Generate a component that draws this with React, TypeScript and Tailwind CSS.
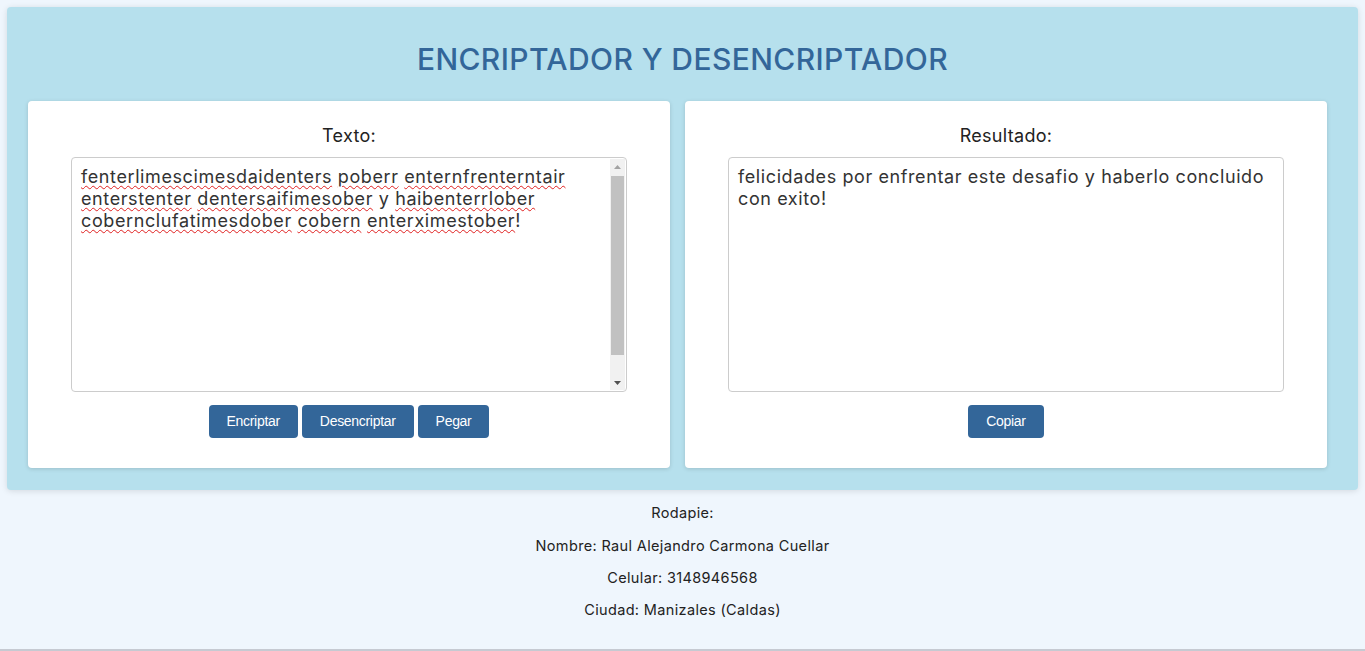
import React from "react";

const encWords = [
  "fenterlimescimesdaidenters",
  "poberr",
  "enternfrenterntair",
  "enterstenter",
  "dentersaifimesober",
  "y",
  "haibenterrlober",
  "cobernclufatimesdober",
  "cobern",
  "enterximestober",
];
const result = "felicidades por enfrentar este desafio y haberlo concluido con exito!";

function Btn({ children }: { children: React.ReactNode }) {
  return (
    <button
      className="h-[33px] rounded-[4px] bg-[#336699] px-[18px] text-[14px] text-white tracking-[-0.3px]"
      style={{ fontFamily: '"Liberation Sans", Arial, sans-serif' }}
    >
      {children}
    </button>
  );
}

function FakeScrollbar() {
  return (
    <div className="absolute right-[1px] top-[1px] bottom-[1px] flex w-[15px] flex-col items-center bg-[#f1f1f1]">
      <div className="flex h-[15px] w-full items-center justify-center">
        <svg width="7" height="4" viewBox="0 0 7 4">
          <polygon points="0,4 7,4 3.5,0" fill="#a3a3a3" />
        </svg>
      </div>
      <div className="mx-[2px] mb-[20px] mt-[2px] w-[13px] flex-1 bg-[#c1c1c1]" />
      <div className="flex h-[15px] w-full items-center justify-center">
        <svg width="7" height="4" viewBox="0 0 7 4">
          <polygon points="0,0 7,0 3.5,4" fill="#505050" />
        </svg>
      </div>
    </div>
  );
}

export default function App() {
  return (
    <div
      className="min-h-[651px] bg-[#eff6fd] text-[#333333] flex flex-col"
      style={{ fontFamily: 'Inter, "Noto Sans", sans-serif' }}
    >
      <div className="mx-[7px] mt-[7px] rounded-[4px] bg-[#b6e0ed] px-[21px] pb-[22px] pt-[32px] shadow-[0_1px_6px_rgba(0,0,0,0.12)]">
        <h1 className="text-center text-[30px] leading-[40px] font-medium text-[#336699] tracking-[0.4px]">
          ENCRIPTADOR Y DESENCRIPTADOR
        </h1>
        <div className="mr-[10px] mt-[22px] grid grid-cols-2 gap-[15px]">
          <div className="h-[367px] rounded-[4px] bg-white px-[43px] pt-[23px] shadow-[0_1px_4px_rgba(0,0,0,0.15)]">
            <div className="text-center text-[18px] leading-[24px] tracking-[0.3px] text-[#222222]">Texto:</div>
            <div className="relative mt-[9px] h-[235px] w-full rounded-[4px] border border-[#cccccc]">
              <div
                role="textbox"
                className="h-full overflow-hidden pl-[9px] pr-[24px] pt-[8px] text-[18px] leading-[22px] tracking-[0.6px] text-[#333333]"
              >
                {encWords.map((w, i) => (
                  <React.Fragment key={i}>
                    {w === "y" ? (
                      <span>y</span>
                    ) : (
                      <span className="underline decoration-wavy decoration-[#e02020] decoration-1 underline-offset-[2px]">
                        {w}
                      </span>
                    )}
                    {i < encWords.length - 1 ? " " : "!"}
                  </React.Fragment>
                ))}
              </div>
              <FakeScrollbar />
            </div>
            <div className="mt-[13px] flex justify-center gap-[4px]">
              <Btn>Encriptar</Btn>
              <Btn>Desencriptar</Btn>
              <Btn>Pegar</Btn>
            </div>
          </div>
          <div className="h-[367px] rounded-[4px] bg-white px-[43px] pt-[23px] shadow-[0_1px_4px_rgba(0,0,0,0.15)]">
            <div className="text-center text-[18px] leading-[24px] tracking-[0.3px] text-[#222222]">Resultado:</div>
            <textarea
              className="mt-[9px] block h-[235px] w-full resize-none rounded-[4px] border border-[#cccccc] px-[9px] py-[8px] text-[18px] leading-[22px] tracking-[0.6px] text-[#333333] outline-none"
              defaultValue={result}
              readOnly
            />
            <div className="mt-[13px] flex justify-center">
              <Btn>Copiar</Btn>
            </div>
          </div>
        </div>
      </div>
      <footer className="flex-1 border-b-[2px] border-[#c6cad2] pt-[13px] text-center text-[14.5px] leading-[20px] tracking-[0.35px] text-[#222222]">
        <p>Rodapie:</p>
        <p className="mt-[13px]">Nombre: Raul Alejandro Carmona Cuellar</p>
        <p className="mt-[12px]">Celular: 3148946568</p>
        <p className="mt-[12px]">Ciudad: Manizales (Caldas)</p>
      </footer>
    </div>
  );
}
